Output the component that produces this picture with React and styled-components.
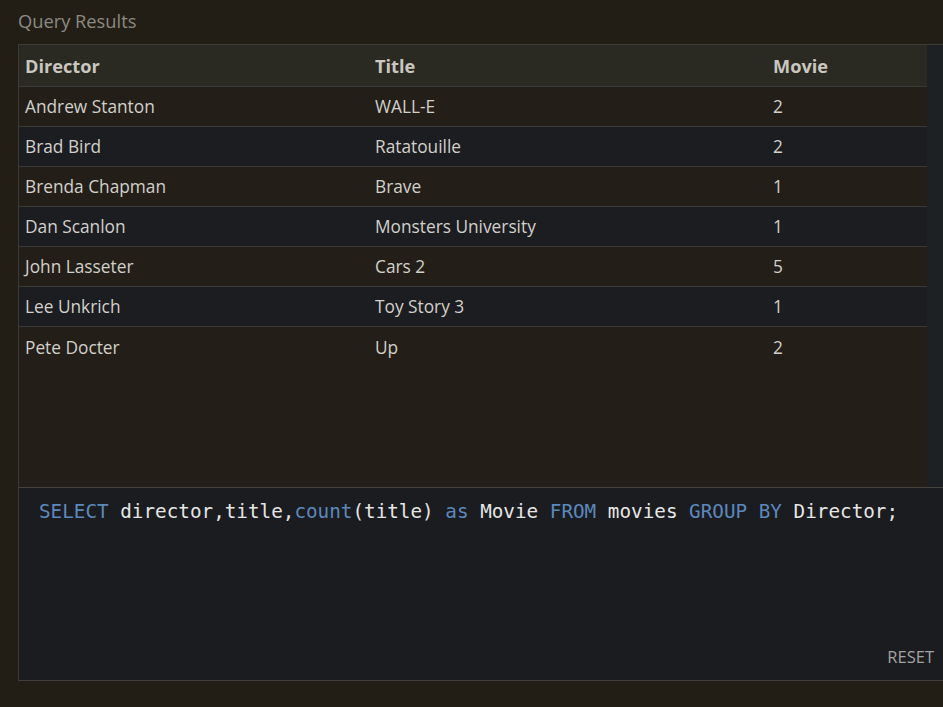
import * as React from 'react';
import styled, { createGlobalStyle } from 'styled-components';

const GlobalStyle = createGlobalStyle`
  html, body {
    margin: 0;
    padding: 0;
    background: #221e16;
    overflow: hidden;
  }
`;

const Page = styled.div`
  width: 943px;
  height: 707px;
  padding-left: 18px;
  box-sizing: border-box;
  background: #221e16;
  font-family: 'Open Sans', 'Noto Sans', sans-serif;
`;

const Heading = styled.div`
  height: 44px;
  line-height: 42px;
  font-size: 18.3px;
  color: #8c8a82;
`;

const Panel = styled.div`
  width: 960px;
  display: flex;
  height: 443px;
  border-top: 1px solid #3d3c38;
  border-left: 1px solid #3b3a36;
  box-sizing: border-box;
`;

const Table = styled.div`
  width: 908px;
  background: #231f18;
  display: grid;
  grid-template-columns: 350px 398px 160px;
  align-content: start;
`;

const Track = styled.div`
  width: 17px;
  background: #1d2124;
`;

const Cell = styled.div`
  display: flex;
  align-items: center;
  padding-left: 6px;
  font-size: ${p => (p.$head ? '18.2px' : '17.3px')};
  color: ${p => (p.$head ? '#c9c7c0' : '#d2d0cb')};
  font-weight: ${p => (p.$head ? 700 : 400)};
  background: ${p => (p.$head ? '#2b2a22' : p.$even ? '#1c1d20' : '#231f18')};
  border-bottom: ${p => (p.$last ? 'none' : '1px solid #3a3a38')};
  box-sizing: border-box;
  height: ${p => (p.$head ? '42px' : '40px')};
  padding-top: ${p => (p.$head ? '1px' : '0')};
`;

const Editor = styled.div`
  width: 960px;
  height: 194px;
  box-sizing: border-box;
  background: #1b1c1f;
  border-top: 1px solid #44433f;
  border-left: 1px solid #3b3a36;
  border-bottom: 1px solid #3f3e3a;
  display: flex;
  flex-direction: column;
  justify-content: space-between;
`;

const Code = styled.pre`
  margin: 0;
  padding: 12px 0 0 20px;
  font-family: 'DejaVu Sans Mono', 'Liberation Mono', monospace;
  font-size: 19.3px;
  color: #e6e6e6;
`;

const Kw = styled.span`
  color: #5b89bd;
`;

const Reset = styled.div`
  align-self: flex-end;
  margin: 0 44px 12px 0;
  font-size: 16.5px;
  color: #a3a3a3;
`;

const rows = [
  ['Andrew Stanton', 'WALL-E', 2],
  ['Brad Bird', 'Ratatouille', 2],
  ['Brenda Chapman', 'Brave', 1],
  ['Dan Scanlon', 'Monsters University', 1],
  ['John Lasseter', 'Cars 2', 5],
  ['Lee Unkrich', 'Toy Story 3', 1],
  ['Pete Docter', 'Up', 2],
];

export default function App() {
  return (
    <Page>
      <GlobalStyle />
      <Heading>Query Results</Heading>
      <Panel>
        <Table>
          {['Director', 'Title', 'Movie'].map(h => (
            <Cell key={h} $head>
              {h}
            </Cell>
          ))}
          {rows.map((r, i) =>
            r.map((v, j) => (
              <Cell key={i + '-' + j} $even={i % 2 === 1} $last={i === rows.length - 1}>
                {v}
              </Cell>
            ))
          )}
        </Table>
        <Track />
      </Panel>
      <Editor>
        <Code>
          <Kw>SELECT</Kw> director,title,<Kw>count</Kw>(title) <Kw>as</Kw> Movie <Kw>FROM</Kw> movies{' '}
          <Kw>GROUP BY</Kw> Director;
        </Code>
        <Reset>RESET</Reset>
      </Editor>
    </Page>
  );
}
